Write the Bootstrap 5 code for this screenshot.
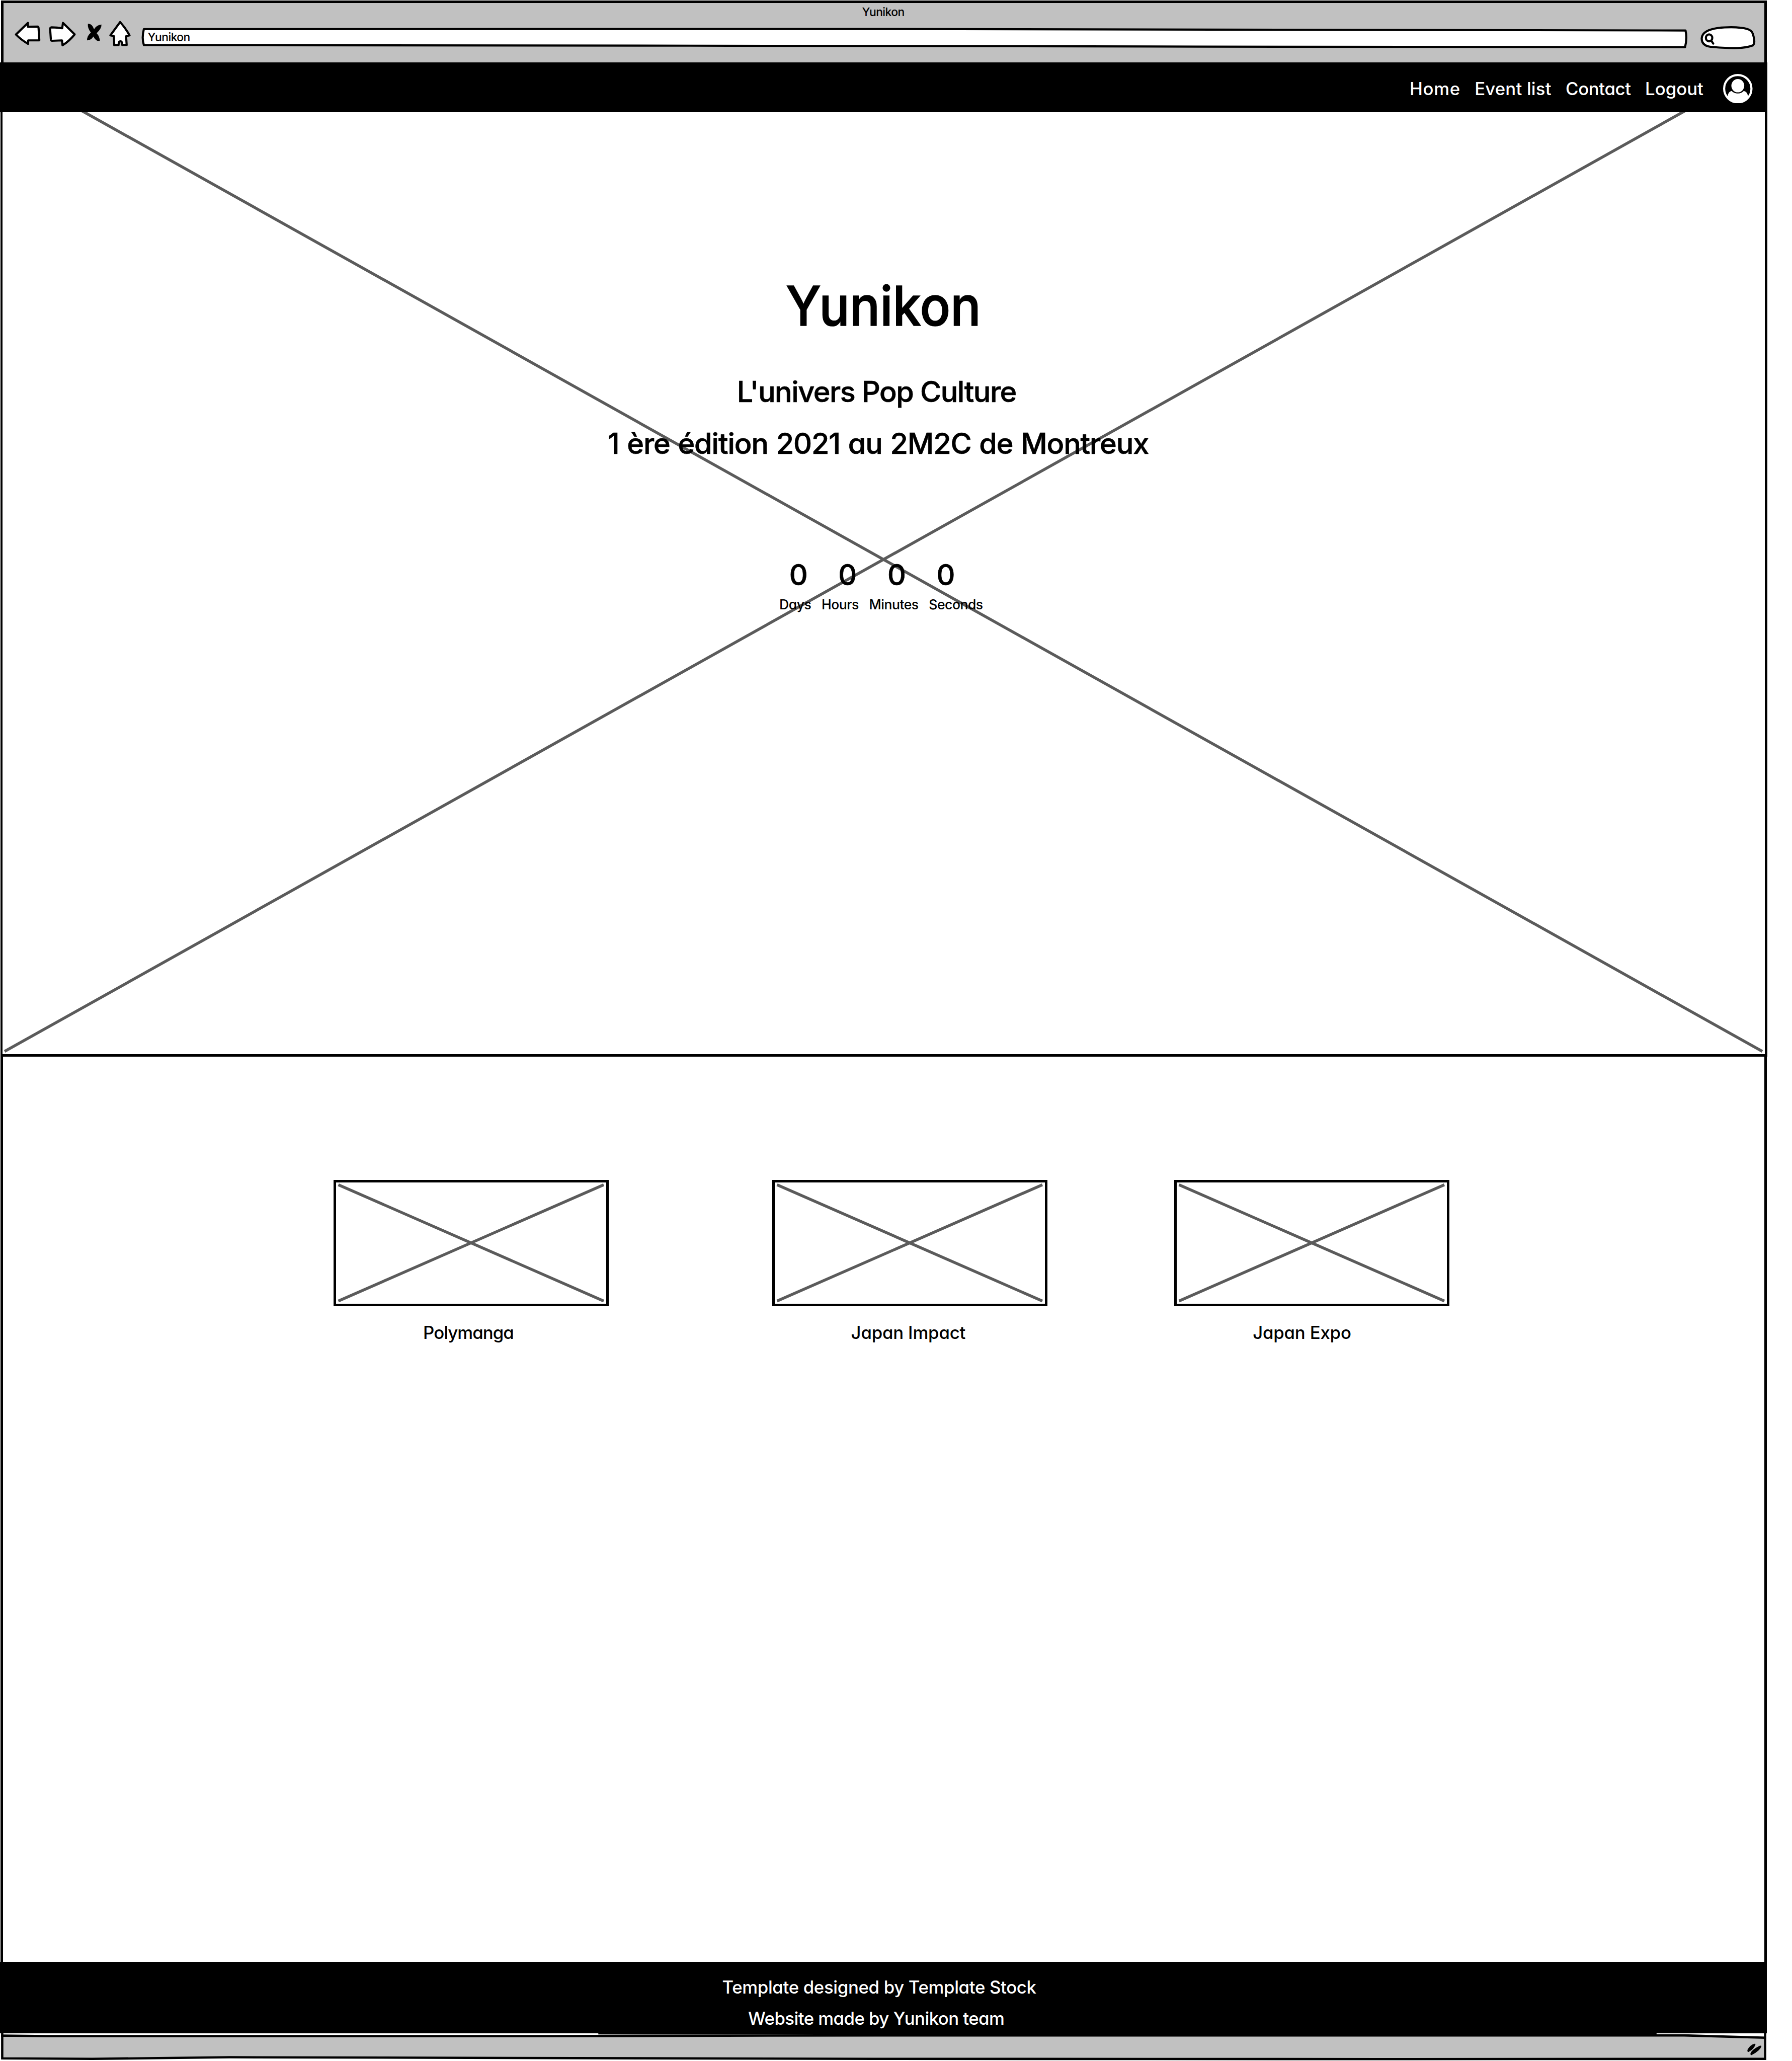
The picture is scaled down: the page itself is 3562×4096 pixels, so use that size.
<!DOCTYPE html>
<html lang="fr">
<head>
<meta charset="utf-8">
<title>Yunikon</title>
<meta name="viewport" content="width=device-width, initial-scale=1">
<link href="https://cdn.jsdelivr.net/npm/bootstrap@5.3.0/dist/css/bootstrap.min.css" rel="stylesheet">
<style>
  /* 1rem = 10 units of the wireframe's own grid */
  html { font-size: 9.1474px; }
  body {
    height: 100vh; overflow: hidden; color: #000; background: #fff;
    font-family: Inter, "Noto Sans", sans-serif; font-weight: 500;
    font-feature-settings: "cv11";
  }
  svg { display: block; }
  .ink { fill: #fff; stroke: #000; stroke-width: 4.6; stroke-linejoin: round; stroke-linecap: round; }

  .chrome-bar { height: 13.45rem; width: 383.75rem; margin: .12rem 0 0 .2rem; background: #c1c1c1; border: .55rem solid #000; border-bottom: 0; }
  .chrome-title { font-size: 2.5rem; line-height: 3.45rem; padding: .3rem .3rem 0 0; letter-spacing: -.06rem; }
  .chrome-tools svg { height: 7rem; }
  .address-text { position: absolute; left: 2.0rem; top: 1.95rem; font-size: 2.5rem; line-height: 3.5rem; letter-spacing: -.06rem; }

  .site-nav { height: 10.83rem; width: 383.95rem; margin-left: .05rem; padding: .5rem 3.15rem 0 0; gap: 3.1rem; --bs-navbar-padding-x: 0; }
  .site-nav .nav-item-link { font-size: 3.8rem; line-height: 1; color: #fff; text-decoration: none; white-space: nowrap; }
  .ls-home { letter-spacing: .07rem; }
  .ls-event { letter-spacing: .02rem; }
  .ls-contact { letter-spacing: -.04rem; }
  .avatar { width: 6.4rem; height: 6.4rem; margin-left: 1.2rem; }

  .hero { height: 205.2rem; width: 383.9rem; margin-left: .12rem; padding-top: 36.1rem; border: solid #000; border-width: 0 .55rem .55rem .45rem; }
  .cross { stroke: #5b5b5b; stroke-width: 6.2; fill: none; }
  .hero-cross { position: absolute; inset: 0; width: 100%; height: 100%; }
  .hero h1 { font-size: 11.8rem; line-height: 12rem; font-weight: 500; letter-spacing: 0; margin: 0 0 7rem; padding-right: .1rem; transform: scaleX(.932); -webkit-text-stroke: 1.6px #000; }
  .hero-line { font-size: 6.28rem; line-height: 11.2rem; margin: 0; white-space: nowrap; -webkit-text-stroke: .7px #000; }
  .hero-line.first { letter-spacing: -.16rem; padding-right: 3.1rem; }
  .hero-line.second { letter-spacing: -.118rem; word-spacing: .17rem; padding-right: 2.4rem; }
  .count-values { margin-top: 20.1rem; padding-right: 5rem; font-size: 6.25rem; line-height: 6rem; -webkit-text-stroke: .7px #000; }
  .count-values span { width: 10.67rem; text-align: center; }
  .count-labels { margin-top: 1.85rem; padding-right: 1.1rem; gap: 2.25rem; font-size: 2.9rem; line-height: 3rem; letter-spacing: -.05rem; }

  .events { height: 196.65rem; width: 383.8rem; margin-left: .1rem; padding: 26.8rem 0 0 71.85rem; border: solid #000; border-width: 0 .55rem 0 .6rem; }
  .event-tile { width: 59.75rem; }
  .event-tile + .event-tile { margin-left: 35.6rem; }
  .event-tile + .event-tile + .event-tile { margin-left: 27.6rem; }
  .event-thumb { height: 27.35rem; border: .55rem solid #000; }
  .event-thumb svg { width: 100%; height: 100%; }
  .event-name { margin: 3.75rem 0 0; font-size: 3.8rem; line-height: 4rem; text-align: center; letter-spacing: -.02rem; }

  .site-footer { height: 15.55rem; width: 383.9rem; padding-top: 2.05rem; font-size: 3.8rem; line-height: 6.8rem; color: #fff; background: #000; text-align: center; overflow: hidden; }
  .status-strip svg { width: 384.5rem; height: 6rem; }
</style>
</head>
<body class="d-flex flex-column align-items-start">

<header class="chrome-bar flex-shrink-0">
  <div class="chrome-title text-center">Yunikon</div>
  <div class="chrome-tools d-flex">
    <svg viewBox="6.5 44 88.5 70" class="ink"><path d="M33.5 75.3 L59.5 50 L59.5 58.4 L81 58 Q82.5 58.2 82.7 62 L84.3 88 L60.2 88 L59.8 95.5 Q45 87 33.5 75.3Z"/></svg>
    <svg viewBox="95 44 80 70" class="ink"><path d="M107.7 63 Q107.6 59.8 111 59.7 Q123 60 134 61.7 L135.6 50 L161 75 Q149 90 134.7 98.6 L133.5 88 L112 88.8 Q109.6 88.6 109.3 86Z"/></svg>
    <svg viewBox="175 44 55 70"><path d="M190 52 Q199 51 203.5 64 Q208 55 219.500 53.500 Q220 62 209 72.500 Q216 80 216 90 Q207 90 202 79.500 Q197 88 188 88 Q188 78 196.500 71 Q189 62 190 52Z"/></svg>
    <svg viewBox="230 44 70 70" class="ink"><path d="M260.400 48.200 Q272 61 280.800 77 L273.300 79 L274.600 98 L265 98 Q264.800 90 261 90 Q257 90 257 98 L247.600 98.600 L246.800 78.700 L239.200 77Z"/></svg>
    <div class="position-relative">
      <svg viewBox="300 44 3380 70" class="ink"><path d="M312 63.500 L1900 63.200 L3662 66.500 Q3666 83 3661 102.800 L2600 101.500 L1500 99.500 L312 98.300 Q307 83 312 63.500Z"/></svg>
      <span class="address-text">Yunikon</span>
    </div>
    <svg viewBox="3680 44 153 70" class="ink"><path d="M3697 84 C3698 62 3735 59.500 3761 59.500 C3790 60 3806 63 3808 74 C3812 86 3813 95 3808 99 C3790 106 3765 106 3722 102.500 C3705 102 3697 96 3697 84Z"/><ellipse cx="3713" cy="82.500" rx="7" ry="7.500"/><path d="M3718 89 L3722 95"/></svg>
  </div>
</header>

<nav class="site-nav navbar flex-nowrap justify-content-end bg-black flex-shrink-0">
  <a class="nav-item-link ls-home" href="#">Home</a>
  <a class="nav-item-link ls-event" href="#">Event list</a>
  <a class="nav-item-link ls-contact" href="#">Contact</a>
  <a class="nav-item-link" href="#">Logout</a>
  <svg class="avatar" viewBox="0 0 64 64">
    <circle cx="32" cy="32" r="29.700" fill="#000" stroke="#fff" stroke-width="4.600"/>
    <ellipse cx="32" cy="25.500" rx="14" ry="14.500" fill="#fff"/>
    <path d="M9.700 49 Q11 38.500 18.500 37 Q24 42.500 32 42.500 Q40 42.500 45 37 Q53 38.500 54.300 49 Q46 62 32 62 Q18 62 9.700 49Z" fill="#fff"/>
  </svg>
</nav>

<section class="hero position-relative flex-shrink-0">
  <svg class="hero-cross" viewBox="5.500 244 3829.500 2047" preserveAspectRatio="none"><path class="cross" d="M10 147 L3830 2285 M3830 147 L10 2285"/></svg>
  <div class="position-relative text-center">
    <h1>Yunikon</h1>
    <p class="hero-line first">L'univers Pop Culture</p>
    <p class="hero-line second">1 ère édition 2021 au 2M2C de Montreux</p>
    <div class="count-values d-flex justify-content-center"><span>0</span><span>0</span><span>0</span><span>0</span></div>
    <div class="count-labels d-flex justify-content-center"><span>Days</span><span>Hours</span><span>Minutes</span><span>Seconds</span></div>
  </div>
</section>

<main class="events d-flex align-items-start flex-shrink-0">
  <div class="event-tile">
    <div class="event-thumb"><svg viewBox="0 0 588 264" preserveAspectRatio="none"><path class="cross" d="M5 5 L583 259 M583 5 L5 259"/></svg></div>
    <p class="event-name" style="letter-spacing:-.105rem;padding-right:1.2rem">Polymanga</p>
  </div>
  <div class="event-tile">
    <div class="event-thumb"><svg viewBox="0 0 588 264" preserveAspectRatio="none"><path class="cross" d="M5 5 L583 259 M583 5 L5 259"/></svg></div>
    <p class="event-name" style="padding-right:.7rem">Japan Impact</p>
  </div>
  <div class="event-tile">
    <div class="event-thumb"><svg viewBox="0 0 588 264" preserveAspectRatio="none"><path class="cross" d="M5 5 L583 259 M583 5 L5 259"/></svg></div>
    <p class="event-name" style="padding-right:4.3rem">Japan Expo</p>
  </div>
</main>

<footer class="site-footer flex-shrink-0">
  <div style="letter-spacing:-.036rem;padding-right:1.8rem">Template designed by Template Stock</div>
  <div style="letter-spacing:-.06rem;padding-right:3.1rem">Website made by Yunikon team</div>
</footer>

<div class="status-strip flex-shrink-0">
  <svg viewBox="0 4418 3845 60">
    <path d="M4.500 4423 L100 4424 L1200 4424 L1900 4422.500 L3660 4422.500 L3836 4427.500 L3836 4473.500 L3000 4474 L1900 4473.500 L500 4470 L200 4473.500 L4.500 4472.500Z" fill="#c1c1c1" stroke="#000" stroke-width="5"/>
    <path d="M4.500 4418 V4426 M3836 4418 V4430" stroke="#000" stroke-width="5"/>
    <path d="M1300 4418 H3600 V4420.500 H1300Z" fill="#000"/>
    <path d="M3814 4440.500 Q3804 4442 3797.500 4454 Q3797 4459 3800 4458.500 Q3812 4452 3815 4442Z M3828 4446 Q3828 4444.500 3824 4445 Q3806 4454 3804 4462 Q3803.500 4466 3807 4465 Q3825 4456 3828 4446Z"/>
  </svg>
</div>

<script src="https://cdn.jsdelivr.net/npm/bootstrap@5.3.0/dist/js/bootstrap.bundle.min.js"></script>
</body>
</html>
